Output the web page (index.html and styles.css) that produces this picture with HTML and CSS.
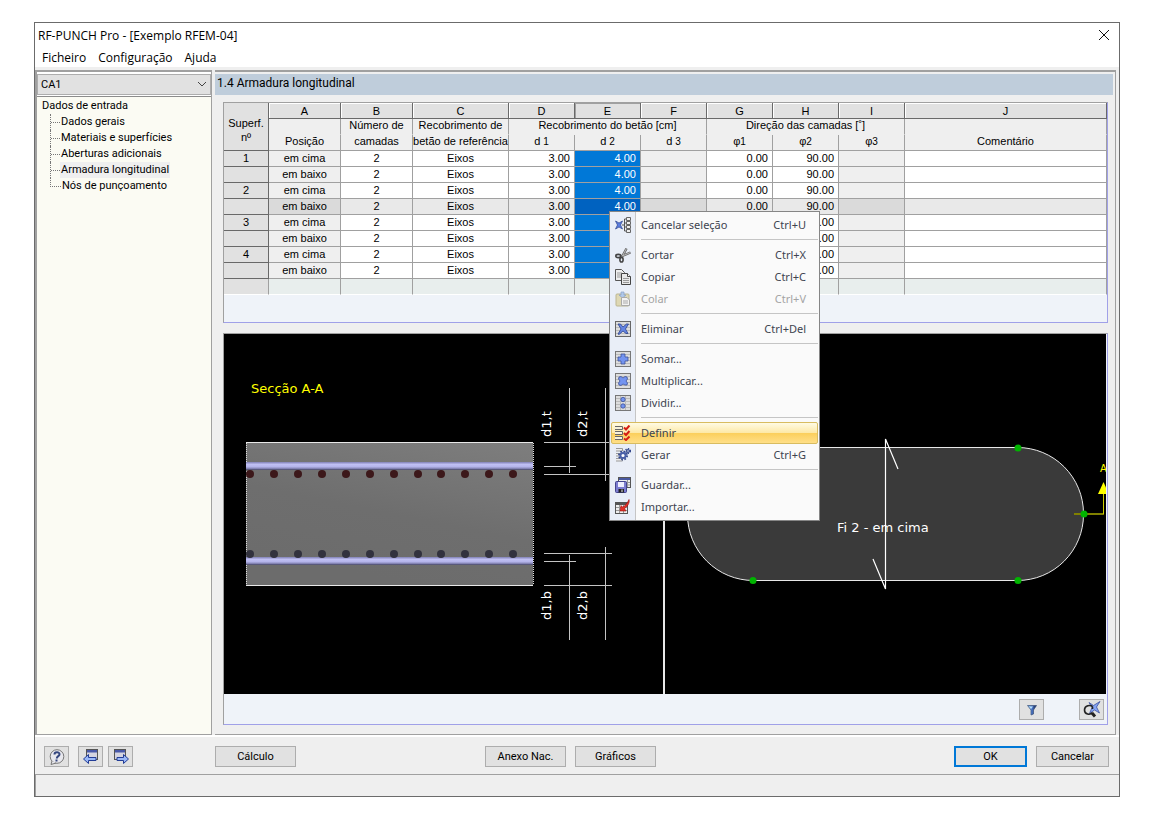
FILE: index.html
```html
<!DOCTYPE html>
<html lang="pt">
<head>
<meta charset="utf-8">
<title>RF-PUNCH Pro - [Exemplo RFEM-04]</title>
<link rel="stylesheet" href="styles.css">
</head>
<body>
<div class="window">
  <header class="titlebar">
    <h1 class="title">RF-PUNCH Pro - [Exemplo RFEM-04]</h1>
    <button class="close" aria-label="Fechar"><svg width="12" height="12" viewBox="0 0 12 12"><path d="M1 1L11 11M11 1L1 11" stroke="#111" fill="none"/></svg></button>
  </header>
  <nav class="menubar">
    <button>Ficheiro</button><button>Configuração</button><button>Ajuda</button>
  </nav>
  <main class="main">
    <aside class="sidebar">
      <div class="combo">
        <select class="case" aria-label="Caso"><option>CA1</option></select>
        <svg class="chevron" width="10" height="6" viewBox="0 0 10 6"><path d="M1 1L5 5L9 1" stroke="#444" fill="none"/></svg>
      </div>
      <div class="tree">
        <a href="#dados">Dados de entrada</a>
        <ul>
          <li><a href="#gerais">Dados gerais</a></li>
          <li><a href="#materiais">Materiais e superfícies</a></li>
          <li><a href="#aberturas">Aberturas adicionais</a></li>
          <li><a href="#armadura" class="current">Armadura longitudinal</a></li>
          <li><a href="#nos">Nós de punçoamento</a></li>
        </ul>
      </div>
    </aside>
    <section class="content">
      <h2 class="heading">1.4 Armadura longitudinal</h2>
      <div class="sheet">
        <table class="grid">
          <colgroup><col class="c-id"><col class="c-a"><col class="c-a"><col class="c-c"><col class="c-n"><col class="c-n"><col class="c-n"><col class="c-n"><col class="c-n"><col class="c-n"><col></colgroup>
          <thead>
            <tr class="letters"><th rowspan="3" class="corner">Superf.<br>nº</th><th>A</th><th>B</th><th>C</th><th>D</th><th class="pressed">E</th><th>F</th><th>G</th><th>H</th><th>I</th><th>J</th></tr>
            <tr class="names"><th></th><th>Número de</th><th>Recobrimento de</th><th colspan="3">Recobrimento do betão [cm]</th><th colspan="3">Direção das camadas [˚]</th><th></th></tr>
            <tr class="units"><th>Posição</th><th>camadas</th><th>betão de referência</th><th>d <small>1</small></th><th>d <small>2</small></th><th>d <small>3</small></th><th>φ<small>1</small></th><th>φ<small>2</small></th><th>φ<small>3</small></th><th>Comentário</th></tr>
          </thead>
          <tbody>
            <tr><th>1</th><td class="ro">em cima</td><td>2</td><td>Eixos</td><td class="num">3.00</td><td class="num sel">4.00</td><td class="ro"></td><td class="num">0.00</td><td class="num">90.00</td><td class="ro"></td><td></td></tr>
            <tr><th></th><td class="ro">em baixo</td><td>2</td><td>Eixos</td><td class="num">3.00</td><td class="num sel">4.00</td><td class="ro"></td><td class="num">0.00</td><td class="num">90.00</td><td class="ro"></td><td></td></tr>
            <tr><th>2</th><td class="ro">em cima</td><td>2</td><td>Eixos</td><td class="num">3.00</td><td class="num sel">4.00</td><td class="ro"></td><td class="num">0.00</td><td class="num">90.00</td><td class="ro"></td><td></td></tr>
            <tr class="active"><th></th><td class="ro">em baixo</td><td>2</td><td>Eixos</td><td class="num">3.00</td><td class="num sel">4.00</td><td class="ro"></td><td class="num">0.00</td><td class="num">90.00</td><td class="ro"></td><td></td></tr>
            <tr><th>3</th><td class="ro">em cima</td><td>2</td><td>Eixos</td><td class="num">3.00</td><td class="num sel">4.00</td><td class="ro"></td><td class="num">0.00</td><td class="num">90.00</td><td class="ro"></td><td></td></tr>
            <tr><th></th><td class="ro">em baixo</td><td>2</td><td>Eixos</td><td class="num">3.00</td><td class="num sel">4.00</td><td class="ro"></td><td class="num">0.00</td><td class="num">90.00</td><td class="ro"></td><td></td></tr>
            <tr><th>4</th><td class="ro">em cima</td><td>2</td><td>Eixos</td><td class="num">3.00</td><td class="num sel">4.00</td><td class="ro"></td><td class="num">0.00</td><td class="num">90.00</td><td class="ro"></td><td></td></tr>
            <tr><th></th><td class="ro">em baixo</td><td>2</td><td>Eixos</td><td class="num">3.00</td><td class="num sel">4.00</td><td class="ro"></td><td class="num">0.00</td><td class="num">90.00</td><td class="ro"></td><td></td></tr>
            <tr class="filler"><th></th><td></td><td></td><td></td><td></td><td></td><td></td><td></td><td></td><td></td><td></td></tr>
          </tbody>
        </table>
      </div>
      <div class="viewer">
        <div class="canvas">
          <svg class="pane" viewBox="0 0 439 360">
            <defs>
              <linearGradient id="slab" x1="1" y1="0" x2="0.6" y2="1"><stop offset="0" stop-color="#7e7e7e"/><stop offset="0.6" stop-color="#6e6e6e"/><stop offset="1" stop-color="#6c6c6c"/></linearGradient>
              <linearGradient id="bar" x1="0" y1="0" x2="0" y2="1"><stop offset="0" stop-color="#8080b4"/><stop offset="0.3" stop-color="#c0c0f4"/><stop offset="0.6" stop-color="#b4b4ea"/><stop offset="0.85" stop-color="#7c7cac"/><stop offset="1" stop-color="#404058"/></linearGradient>
            </defs>
            <text class="label yellow" x="27" y="59">Secção A-A</text>
            <rect x="22" y="108" width="287" height="144" fill="url(#slab)"/>
            <path d="M22 108.500H309M22 251.500H309" stroke="#e8e8e8"/>
            <path d="M22.500 109V251M309.500 109V251" stroke="#ddd" stroke-dasharray="1 1"/>
            <rect x="22" y="128" width="287" height="8" fill="url(#bar)"/>
            <rect x="22" y="223" width="287" height="8" fill="url(#bar)"/>
            <g fill="#3c181a"><circle cx="26" cy="140" r="4"/><circle cx="50" cy="140" r="4"/><circle cx="74" cy="140" r="4"/><circle cx="98" cy="140" r="4"/><circle cx="122" cy="140" r="4"/><circle cx="146" cy="140" r="4"/><circle cx="170" cy="140" r="4"/><circle cx="194" cy="140" r="4"/><circle cx="217" cy="140" r="4"/><circle cx="241" cy="140" r="4"/><circle cx="265" cy="140" r="4"/><circle cx="289" cy="140" r="4"/></g>
            <g fill="#32323e"><circle cx="26" cy="220" r="4"/><circle cx="50" cy="220" r="4"/><circle cx="74" cy="220" r="4"/><circle cx="98" cy="220" r="4"/><circle cx="122" cy="220" r="4"/><circle cx="146" cy="220" r="4"/><circle cx="170" cy="220" r="4"/><circle cx="194" cy="220" r="4"/><circle cx="217" cy="220" r="4"/><circle cx="241" cy="220" r="4"/><circle cx="265" cy="220" r="4"/><circle cx="289" cy="220" r="4"/></g>
            <path d="M320 108.500H388M320 132.500H352M320 140.500H388M320 219.500H388M320 227.500H352M320 251.500H388M345.500 54V139M381.500 54V147M345.500 221V306M381.500 213V306" stroke="#c4c4c4" fill="none"/>
            <text class="label" transform="translate(327 103) rotate(-90)">d1,t</text>
            <text class="label" transform="translate(363 103) rotate(-90)">d2,t</text>
            <text class="label" transform="translate(327 286) rotate(-90)">d1,b</text>
            <text class="label" transform="translate(363 286) rotate(-90)">d2,b</text>
          </svg>
          <svg class="pane" viewBox="0 0 441 360">
            <rect x="22.500" y="113.500" width="396" height="133" rx="66" fill="#3a3a3a" stroke="#e8e8e8"/>
            <path d="M409 180H439" stroke="#808000" stroke-width="2"/><path d="M438.500 180V158" stroke="#d0d000"/><path d="M438.500 148L444 160H433Z" fill="#ff0"/>
            <text class="label small yellow" x="435" y="138">A</text>
            <path d="M233 135L220.500 105V255L208 225" stroke="#fff" fill="none" stroke-width="1.200"/>
            <g fill="#00b400"><circle cx="353" cy="114" r="3.500"/><circle cx="88" cy="246.500" r="3.500"/><circle cx="353" cy="246.500" r="3.500"/><circle cx="419" cy="180" r="3.500"/></g>
            <text class="label" x="172" y="198">Fi 2 - em cima</text>
          </svg>
        </div>
        <div class="viewer-tools">
          <button class="btn icon" aria-label="Filtro"><svg width="16" height="16" viewBox="0 0 16 16"><defs><linearGradient id="fun"><stop offset="0" stop-color="#8ec4ee"/><stop offset="0.5" stop-color="#4a74c8"/><stop offset="1" stop-color="#131c40"/></linearGradient></defs><path d="M3.500 3.500H12.500L9.500 8V12L7 13V8Z" fill="url(#fun)" stroke="#3a5078" stroke-width=".7"/><path d="M5 4.500H9L7 7Z" fill="#b8e0fa"/></svg></button>
          <button class="btn icon" aria-label="Anular zoom"><svg width="18" height="18" viewBox="0 0 18 18"><path d="M6 1.500L10.500 4.500L17 .5L13.500 6L16.500 12L11.500 9L6.500 12.500L9 6.500Z" fill="#86a4f4" stroke="#3c50a0" stroke-width=".8"/><path d="M9.500 5.500C7.500 3.500 1.500 4.500 1.500 9C1.500 13.500 7 14.500 9.500 11.500M9.500 5.500V8" fill="none" stroke="#222" stroke-width="1.600"/><path d="M9 12L12 15.500" stroke="#222" stroke-width="3"/></svg></button>
        </div>
      </div>
    </section>
  </main>
  <footer class="actions">
    <div class="group left">
      <button class="btn icon help" aria-label="Ajuda"><svg width="18" height="18" viewBox="0 0 18 18"><ellipse cx="9" cy="8.500" rx="6.800" ry="6.800" fill="#e8e8ee" stroke="#777"/><path d="M4 13L3 16.500L8 15" fill="#e8e8ee" stroke="#777"/><path d="M6.500 6.500C6.500 3.500 11.500 3.500 11.500 6.300C11.500 8.300 8.800 8 8.800 10.500M8.500 11.500V13.500" stroke="#34467e" stroke-width="2" fill="none"/></svg></button>
      <button class="btn icon" aria-label="Anterior"><svg width="18" height="18" viewBox="0 0 18 18"><rect x="4.500" y="1.500" width="11" height="10" fill="#d4d4e0" stroke="#555"/><rect x="5" y="2" width="10" height="2.500" fill="#4858a8"/><path d="M1.500 11L6.500 6.500V9.500H14V12.500H6.500V15.500Z" fill="#9ab8f8" stroke="#223c96"/></svg></button>
      <button class="btn icon" aria-label="Seguinte"><svg width="18" height="18" viewBox="0 0 18 18"><rect x="2.500" y="1.500" width="11" height="10" fill="#d4d4e0" stroke="#555"/><rect x="3" y="2" width="10" height="2.500" fill="#4858a8"/><path d="M16.500 11L11.500 6.500V9.500H5V12.500H11.500V15.500Z" fill="#9ab8f8" stroke="#223c96"/></svg></button>
    </div>
    <button class="btn wide">Cálculo</button>
    <div class="group mid"><button class="btn wide">Anexo Nac.</button><button class="btn wide">Gráficos</button></div>
    <div class="group right"><button class="btn dialog default">OK</button><button class="btn dialog">Cancelar</button></div>
  </footer>
  <div class="status"></div>

  <ul class="context">
    <li><button><svg viewBox="0 0 16 16"><path d="M7 8H10M9.500 2V14M9.500 2H11M9.500 6H11M9.500 10H11M9.500 14H11" stroke="#555" fill="none"/><path d="M11.500 .5H15.500V3.500H11.500ZM11.500 4.500H15.500V7.500H11.500ZM11.500 8.500H15.500V11.500H11.500ZM11.500 12.500H15.500V15.500H11.500Z" fill="#eee" stroke="#666"/><path d="M.5 4L4 6L7.500 4L5.500 8L7.500 12L4 10L.5 12L2.500 8Z" fill="#5c7ee0" stroke="#2c438c" stroke-width=".7"/></svg><span>Cancelar seleção</span><kbd>Ctrl+U</kbd></button></li>
    <li class="sep" role="separator"></li>
    <li><button><svg viewBox="0 0 16 16"><path d="M6 9.500L15.500 5.500M7 10L11.500 1.500" stroke="#666" stroke-width="2.400"/><path d="M6 9.500L15 5.700M7.500 9L11.200 2" stroke="#bbb"/><ellipse cx="3.300" cy="9" rx="2.500" ry="1.600" fill="none" stroke="#444" stroke-width="1.600"/><ellipse cx="6.500" cy="12.700" rx="1.600" ry="2.300" fill="none" stroke="#444" stroke-width="1.600"/></svg><span>Cortar</span><kbd>Ctrl+X</kbd></button></li>
    <li><button><svg viewBox="0 0 16 16"><path d="M.5.5H6.500L9.500 3.500V11.500H.5Z" fill="#eee" stroke="#555"/><path d="M2 4H7M2 6H7M2 8H7" stroke="#999"/><path d="M6.500 4.500H12.500L15.500 7.500V15.500H6.500Z" fill="#e8e8e8" stroke="#444"/><path d="M12.500 4.500V7.500H15.500" fill="#fff" stroke="#444"/><path d="M8 9.500H14M8 11.500H14M8 13.500H14" stroke="#999"/></svg><span>Copiar</span><kbd>Ctrl+C</kbd></button></li>
    <li><button disabled><svg viewBox="0 0 16 16"><rect x="1" y="3" width="13" height="12" rx="1" fill="#ded8b4" stroke="#bcb692"/><path d="M6 1H9V4H11L7.500 7L4 4H6Z" fill="#b0c8ea" stroke="#8aa0c4" stroke-width=".7"/><path d="M6.500 6.500H12L14.500 9V14.500H6.500Z" fill="#f2f2f2" stroke="#aaa"/><path d="M8 10H13M8 12H13" stroke="#aaa"/></svg><span>Colar</span><kbd>Ctrl+V</kbd></button></li>
    <li class="sep" role="separator"></li>
    <li><button><svg viewBox="0 0 16 16"><rect x=".5" y=".5" width="15" height="15" fill="#ddd" stroke="#666"/><path d="M1 3.500H15M1 6.500H15M1 9.500H15M1 12.500H15" stroke="#bbb"/><path d="M3 3L5.500 3L8 6L11.500 3L13.500 3L10.500 8L13 12.500L11 12.500L8 10L4 13.500L3 13L6 8Z" fill="#6484e2" stroke="#2c438c" stroke-width=".8"/></svg><span>Eliminar</span><kbd>Ctrl+Del</kbd></button></li>
    <li class="sep" role="separator"></li>
    <li><button><svg viewBox="0 0 16 16"><rect x=".5" y=".5" width="15" height="15" fill="#ddd" stroke="#777"/><path d="M1 3.500H15M1 6.500H15M1 9.500H15M1 12.500H15" stroke="#bbb"/><path d="M6 3H10V6H13V10H10V13H6V10H3V6H6Z" fill="#7494f0" stroke="#3c5098" stroke-width=".8"/></svg><span>Somar...</span></button></li>
    <li><button><svg viewBox="0 0 16 16"><rect x=".5" y=".5" width="15" height="15" fill="#ddd" stroke="#777"/><path d="M1 3.500H15M1 6.500H15M1 9.500H15M1 12.500H15" stroke="#bbb"/><path d="M4 4L6 3.500L8 5L10 3.500L12 4L12.500 6L11 8L12.500 10L12 12H10L8 11L6 12.500L4 12L3.500 10L5 8L3.500 6Z" fill="#7494f0" stroke="#3c5098" stroke-width=".8"/></svg><span>Multiplicar...</span></button></li>
    <li><button><svg viewBox="0 0 16 16"><rect x=".5" y=".5" width="15" height="15" fill="#ddd" stroke="#777"/><path d="M1 3.500H15M1 6.500H15M1 9.500H15M1 12.500H15" stroke="#bbb"/><path d="M5.500 1V15M10.500 1V15" stroke="#bbb"/><circle cx="8" cy="4.500" r="2.200" fill="#7494f0" stroke="#3c5098" stroke-width=".8"/><circle cx="8" cy="11" r="2.200" fill="#7494f0" stroke="#3c5098" stroke-width=".8"/></svg><span>Dividir...</span></button></li>
    <li class="sep" role="separator"></li>
    <li><button class="hot"><svg viewBox="0 0 16 16"><path d="M0 1.500H7.500V4.500H0M0 6.500H7.500V9.500H0M0 11.500H7.500V14.500H0" fill="#f6f0d8" stroke="#666"/><path d="M9 2.500L11 4.500L14.500 .5M9 8L11 10L14.500 6M9 13.500L11 15L14.500 11.500" fill="none" stroke="#d41c14" stroke-width="2"/></svg><span>Definir</span></button></li>
    <li><button><svg viewBox="0 0 16 16"><path d="M1 1.500H7.500V4H1M1 6.500H7V9H1M1 11.500H7.500V14H1" fill="#eee" stroke="#999"/><circle cx="8" cy="8.500" r="4" fill="none" stroke="#34488c" stroke-width="2" stroke-dasharray="1.600 1.540"/><circle cx="8" cy="8.500" r="2.600" fill="#fff" stroke="#4a60a8" stroke-width="2"/><circle cx="13" cy="4" r="2.400" fill="none" stroke="#34488c" stroke-width="1.400" stroke-dasharray="1.200 1.310"/><circle cx="13" cy="4" r="1.400" fill="#fff" stroke="#34488c" stroke-width="1.300"/></svg><span>Gerar</span><kbd>Ctrl+G</kbd></button></li>
    <li class="sep" role="separator"></li>
    <li><button><svg viewBox="0 0 16 16"><rect x="3.500" y=".5" width="12" height="10" fill="#eee" stroke="#555"/><path d="M4 2H15" stroke="#4858a0" stroke-width="2"/><path d="M4 5.500H15M4 8H15M12.500 3V10" stroke="#999"/><rect x=".5" y="4.500" width="11" height="11" rx="1" fill="#7c7cd0" stroke="#44448c"/><path d="M3 5H9V10H3Z" fill="#eef"/><path d="M3.500 12H9V15.500H3.500Z" fill="#222"/><path d="M7 12.500V15" stroke="#eee"/></svg><span>Guardar...</span></button></li>
    <li><button><svg viewBox="0 0 16 16"><rect x=".5" y="3.500" width="12" height="11" fill="#eee" stroke="#555"/><path d="M1 5H12" stroke="#555" stroke-width="2"/><path d="M1 8.500H12M1 11.500H12M4.500 6V14M8.500 6V14" stroke="#999"/><path d="M14 .5C15 4 12 8 9.500 9.500L11 12L5 12L6 6.500L7.500 8C10 7 12.500 4 14 .5Z" fill="#e03028" stroke="#98100c" stroke-width=".6"/></svg><span>Importar...</span></button></li>
  </ul>
</div>
</body>
</html>
```
FILE: styles.css
```css
* { box-sizing: border-box; }
body {
  margin: 0;
  min-height: 100vh;
  padding: 22px 32px 25px 34px;
  display: flex;
  background: #fff;
  color: #000;
  font-family: "Open Sans", "Noto Sans", sans-serif;
  font-size: 12px;
}
button, select { font: inherit; color: inherit; margin: 0; }
h1, h2 { margin: 0; font-size: 12px; font-weight: 400; }
a { color: inherit; text-decoration: none; }
ul { list-style: none; margin: 0; padding: 0; }

.window {
  position: relative;
  flex: 1;
  min-width: 0;
  display: flex;
  flex-direction: column;
  border: 1px solid #6b6b6b;
  background: #efefef;
}
.titlebar {
  display: flex;
  justify-content: space-between;
  align-items: center;
  height: 24px;
  padding: 0 9px 0 3px;
  background: #fff;
}
.close { display: flex; padding: 0; border: 0; background: none; }
.menubar { display: flex; gap: 12px; height: 20px; padding-left: 7px; background: #fff; }
.menubar button { padding: 0; border: 0; background: none; line-height: 22px; }

.main { flex: 1; display: flex; gap: 3px; margin-top: 3px; border-bottom: 2px solid #fff; }
.sidebar {
  flex: none;
  width: 177px;
  display: flex;
  flex-direction: column;
  border: 1px solid #a0a0a0;
  border-width: 2px 1px 1px 2px;
  background: #fbfbf3;
  font-family: Roboto, "Noto Sans", sans-serif;
  font-size: 11px;
}
.combo { display: grid; align-items: center; height: 24px; background: #fff; }
.case {
  grid-area: 1 / 1;
  appearance: none;
  width: 100%;
  height: 21px;
  padding: 0 3px;
  border: 1px solid #adadad;
  border-radius: 0;
  background: #e1e1e1;
}
.chevron { grid-area: 1 / 1; justify-self: end; margin-right: 4px; pointer-events: none; }
.tree { flex: 1; padding: 1px 0 0 5px; border-top: 1px solid #8c8c8c; line-height: 16px; }
.tree ul { padding-left: 8px; }
.tree li { display: flex; height: 16px; border-left: 1px dotted #777; }
.tree li::before { content: ""; width: 9px; height: 8px; border-bottom: 1px dotted #777; }
.tree li:last-child { border-left-color: transparent; }
.tree li:last-child::before { width: 10px; margin-left: -1px; border-left: 1px dotted #777; }
.tree li a { padding: 0 1px; }
.current { background: #efefef; }

.content {
  flex: 1;
  min-width: 0;
  display: flex;
  flex-direction: column;
  margin-right: 3px;
  padding: 2px 0 9px;
  border: 1px solid #a0a0a0;
  border-width: 2px 1px 1px 0;
}
.heading {
  height: 21px;
  margin-right: 2px;
  padding-left: 2px;
  background: #bfcddb;
  font-family: Roboto, "Noto Sans", sans-serif;
  line-height: 19px;
}
.sheet {
  margin: 7px 7px 0 8px;
  padding-bottom: 27px;
  border: 1px solid #a0a0e8;
  border-top-color: #a0a0a0;
  border-left-color: #a0a0a0;
  background: #eff3f9;
}
.grid {
  width: 100%;
  table-layout: fixed;
  border-collapse: separate;
  border-spacing: 0;
  font-family: "Liberation Sans", Arial, sans-serif;
  font-size: 11px;
  line-height: 15px;
  white-space: nowrap;
}
.c-id { width: 45px; }
.c-a { width: 72px; }
.c-c { width: 96px; }
.c-n { width: 66px; }
.grid th, .grid td {
  height: 16px;
  padding: 0;
  border-right: 1px solid #a0a0a0;
  border-bottom: 1px solid #a0a0a0;
  font-weight: 400;
  text-align: center;
}
.grid thead th { background: #efefef; }
.grid .letters th {
  line-height: 14px;
  border-right-color: #696969;
  border-bottom-color: #696969;
  background: #e1e1e1;
  box-shadow: inset 1px 1px #fff;
}
.grid .letters .pressed { box-shadow: inset 1px 1px #a0a0a0; }
.grid .letters .corner { padding-top: 7px; line-height: 14px; box-shadow: none; }
.names th { border-bottom-color: #efefef !important; }
.names th, .units th { line-height: 13px; vertical-align: top; }
.grid small { font-size: 10px; }
.grid td { background: #fff; }
.grid .ro { background: #efefef; }
.grid .num { padding-right: 4px; text-align: right; }
.grid .sel { background: #0078d7; color: #fff; }
.grid tbody th { background: #e1e1e1; border-color: #696969; }
.grid .active td { background: #e9e9e9; }
.grid .active .ro { background: #dadada; }
.grid .active .sel { background: #0062c0; }
.grid .filler td { background: #e8eeed; border-bottom-color: #fff; }
.grid .filler th { border-color: #a0a0a0; border-bottom-color: #fff; }

.viewer {
  flex: 1;
  display: flex;
  flex-direction: column;
  margin: 10px 7px 0 8px;
  border: 1px solid #a0a0e8;
  border-top-color: #a0a0a0;
  border-left-color: #a0a0a0;
  background: #eff3f9;
}
.canvas { flex: 1; display: grid; grid-template-columns: 439fr 443fr; margin-right: 1px; background: #000; }
.pane { width: 100%; height: 100%; }
.pane + .pane { border-left: 2px solid #e8e8e8; }
.label { fill: #fff; font-family: "DejaVu Sans", sans-serif; font-size: 13px; }
.small { font-size: 10px; }
.yellow { fill: #ff0; }
.viewer-tools { display: flex; justify-content: flex-end; gap: 35px; height: 30px; padding: 5px 3px 0; }

.btn {
  height: 21px;
  padding: 0;
  border: 1px solid #adadad;
  background: #e1e1e1;
  font-family: Roboto, "Noto Sans", sans-serif;
  font-size: 11px;
  line-height: 19px;
}
.icon { display: flex; align-items: center; justify-content: center; width: 25px; }
.wide { width: 81px; }
.dialog { width: 73px; }
.default { border: 2px solid #0078d7; line-height: 17px; }
.actions { display: flex; height: 37px; padding: 9px 10px 0 9px; }
.group { display: flex; gap: 9px; }
.left { width: 171px; gap: 5px; }
.help { margin-right: 4px; }
.mid { margin-left: 189px; }
.right { margin-left: auto; }
.status { height: 22px; border: 1px solid #a0a0a0; border-width: 1px 0 0 1px; }

.context {
  position: absolute;
  left: 574px;
  top: 188px;
  width: 211px;
  padding: 2px 1px;
  border: 1px solid #868686;
  background: linear-gradient(90deg, #e9eef7 25px, #c5c5c5 25px, #c5c5c5 26px, #fafafa 26px);
  color: #404450;
  font-family: "Noto Sans", sans-serif;
  font-size: 11px;
}
.context button {
  display: flex;
  align-items: center;
  width: 100%;
  height: 22px;
  padding: 0 11px 0 3px;
  border: 1px solid transparent;
  background: none;
  text-align: left;
}
.context svg { flex: none; width: 16px; height: 16px; margin-right: 10px; }
.context span { flex: 1; padding-bottom: 2px; }
.context kbd { padding-bottom: 2px; font: inherit; }
.context button:disabled { color: #a4a4a4; }
.context .hot {
  border-color: #d8bc60;
  border-radius: 2px;
  background: linear-gradient(#fffbe4, #fde9a8 48%, #fbcf5c 52%, #ffdf88);
}
.sep { height: 8px; margin-left: 30px; border-bottom: 4px solid transparent; background: linear-gradient(#c5c5c5, #c5c5c5) 0 3px / 100% 1px no-repeat; }
```
